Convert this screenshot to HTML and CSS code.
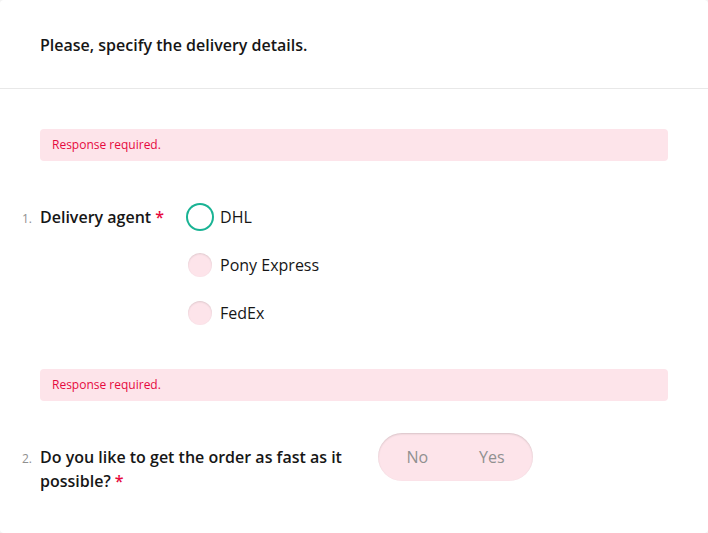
FILE: index.html
```html
<!DOCTYPE html>
<html lang="en">
<head>
<meta charset="utf-8">
<title>Delivery details</title>
<link rel="stylesheet" href="styles.css">
</head>
<body>
<div class="card">
  <div class="header">
    <div class="header-title">Please, specify the delivery details.</div>
  </div>
  <div class="body">
    <div class="question">
      <div class="error">Response required.</div>
      <div class="q-row">
        <div class="q-title q-title-1">
          <span class="q-num">1.</span>
          <span class="q-text">Delivery agent <span class="req">*</span></span>
        </div>
        <div class="radios">
          <label class="radio-item">
            <span class="radio radio-focus"></span>
            <span class="radio-label">DHL</span>
          </label>
          <label class="radio-item">
            <span class="radio"></span>
            <span class="radio-label">Pony Express</span>
          </label>
          <label class="radio-item">
            <span class="radio"></span>
            <span class="radio-label">FedEx</span>
          </label>
        </div>
      </div>
    </div>
    <div class="question">
      <div class="error">Response required.</div>
      <div class="q-row">
        <div class="q-title q-title-2">
          <span class="q-num">2.</span>
          <span class="q-text">Do you like to get the order as fast as it possible? <span class="req">*</span></span>
        </div>
        <div class="toggle">
          <span class="toggle-opt">No</span>
          <span class="toggle-opt">Yes</span>
        </div>
      </div>
    </div>
  </div>
</div>
</body>
</html>
```

FILE: styles.css
```css
html, body {
  margin: 0;
  height: 100%;
}
body {
  background: #f3f3f3;
  font-family: "Open Sans", "Liberation Sans", sans-serif;
  color: #161616;
}
.card {
  box-sizing: border-box;
  height: 100%;
  background: #ffffff;
  border-radius: 4px;
}
.header {
  box-sizing: border-box;
  height: 89px;
  border-bottom: 1px solid #e8e8e8;
  padding: 0 40px;
  display: flex;
  align-items: center;
}
.header-title {
  font-size: 16px;
  font-weight: 600;
  line-height: 24px;
  margin-top: 2px;
}
.body {
  padding: 40px 40px 0 40px;
  display: flex;
  flex-direction: column;
  gap: 32px;
}
.error {
  box-sizing: border-box;
  height: 32px;
  border-radius: 4px;
  background: #fde4ea;
  color: #e60a3e;
  font-size: 12px;
  line-height: 16px;
  padding: 8px 12px;
  margin-bottom: 32px;
}
.q-row {
  display: flex;
  align-items: flex-start;
}
.q-title {
  display: flex;
  align-items: baseline;
  padding-top: 12px;
  font-size: 16px;
  font-weight: 600;
  line-height: 24px;
  flex: 0 1 auto;
  max-width: 314px;
  margin-right: 24px;
}
.q-num {
  flex: 0 0 18px;
  margin-left: -18px;
  font-size: 12px;
  font-weight: 400;
  color: #909090;
}
.req {
  color: #e60a3e;
}
.radios {
  display: flex;
  flex-direction: column;
}
.radio-item {
  display: flex;
  align-items: center;
  height: 48px;
}
.radio {
  box-sizing: border-box;
  width: 24px;
  height: 24px;
  border-radius: 50%;
  background: #fde4ea;
  box-shadow: inset 0 1px 2px rgba(0, 0, 0, 0.12);
  margin: 0 8px 0 0;
}
.radio-focus {
  background: #ffffff;
  box-shadow: 0 0 0 2px #19b394;
}
.radio-label {
  font-size: 16px;
  line-height: 24px;
}
.toggle {
  box-sizing: border-box;
  width: 155px;
  height: 48px;
  border-radius: 24px;
  background: #fde4ea;
  box-shadow: inset 0 1px 2px rgba(0, 0, 0, 0.15);
  display: flex;
  align-items: center;
}
.toggle-opt {
  flex: 1 1 0;
  text-align: center;
  font-size: 16px;
  line-height: 24px;
  color: #909090;
}
.toggle-opt:first-child {
  padding-left: 2px;
}
.toggle-opt:last-child {
  padding-right: 4px;
}
```
